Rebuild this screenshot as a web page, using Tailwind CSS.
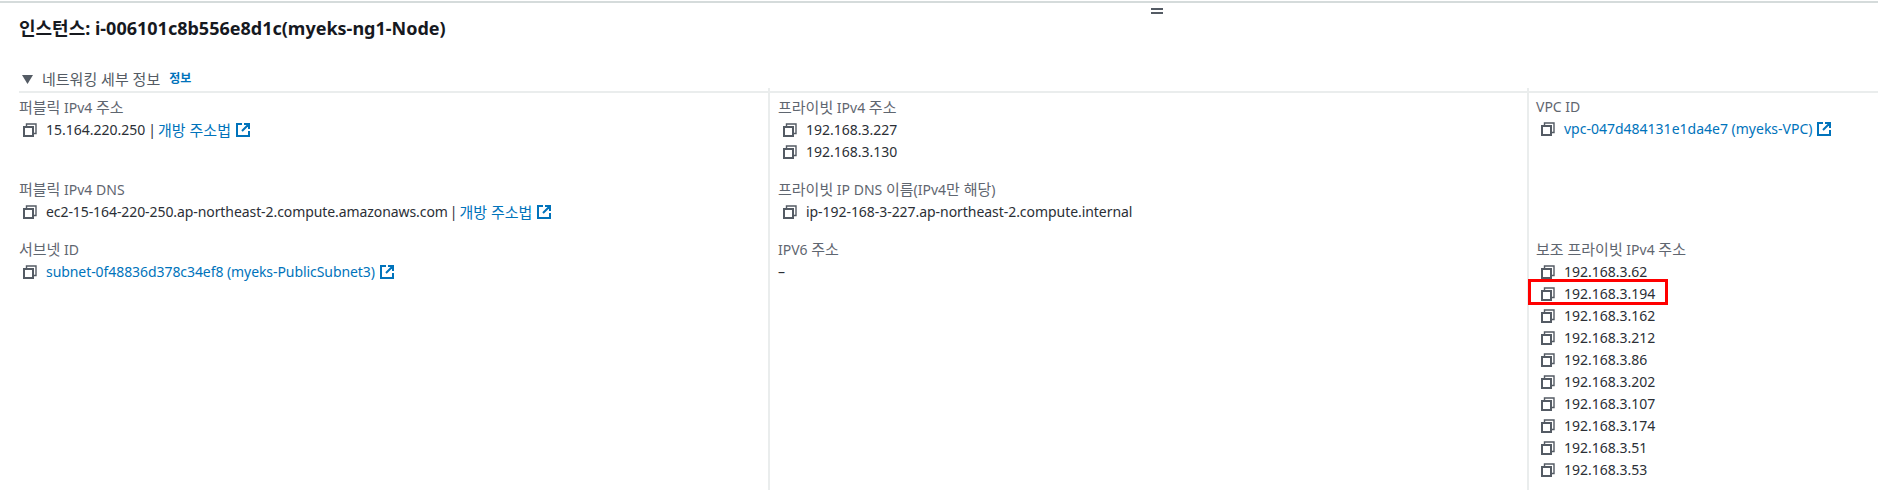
<!DOCTYPE html>
<html lang="ko">
<head>
    <meta charset="UTF-8">
    <meta name="viewport" content="width=device-width, initial-scale=1.0">
    <title>인스턴스 네트워킹 세부 정보</title>
    <script src="https://cdn.jsdelivr.net/npm/@tailwindcss/browser@4"></script>
</head>
<body class="bg-white h-[490px] overflow-hidden font-['Noto_Sans','Noto_Sans_CJK_KR',sans-serif] text-[14px] leading-[22px] text-[#2b2f36]">
    <svg width="0" height="0" class="absolute">
        <symbol id="copy" viewBox="0 0 14 14">
            <path d="M1 4h9v9H1z" fill="none" stroke="#545b64" stroke-width="2"/>
            <path d="M3.5 3V1h9.500v9.500h-2" fill="none" stroke="#545b64" stroke-width="1.400"/>
        </symbol>
        <symbol id="ext" viewBox="0 0 14 14">
            <path d="M6 1H1v12h12V8 M8 1h5v5 M13 1L6 8" fill="none" stroke="#0073bb" stroke-width="2"/>
        </symbol>
    </svg>

    <div class="h-[2px] mt-px bg-[#d5dbdb]"></div>

    <!-- resize handle -->
    <div class="absolute left-[1151px] top-[8px] w-[12px] h-[6px] border-y-2 border-[#545b64]"></div>

    <h1 class="pl-[19px] mt-[13px] h-[24px] text-[18px] leading-[24px] font-bold text-[#16191f]">인스턴스: i-006101c8b556e8d1c(myeks-ng1-Node)</h1>

    <div class="ml-[19px] mt-[29px] h-[24px] border-b-2 border-[#eaeded] flex items-start">
        <svg class="mt-[6px] ml-[3px] mr-[9px]" width="11" height="9" viewBox="0 0 11 9"><path d="M0 0h11L5.500 9z" fill="#545b64"/></svg>
        <span class="text-[#545b64] text-[15px] leading-[20px]">네트워킹 세부 정보</span>
        <span class="ml-[9px] text-[12px] leading-[20px] font-bold text-[#0073bb]">정보</span>
    </div>

    <div class="grid grid-cols-[749px_759px_1fr] ml-[19px] -mt-[5px] h-[405px]">
        <!-- col 1 -->
        <div class="pt-[8px]">
            <div class="h-[82px]">
                <div class="text-[#5f6670]"><span class="text-[15px]">퍼블릭</span> IPv4 <span class="text-[15px]">주소</span></div>
                <div class="flex items-center h-[22px] pl-[4px]">
                    <svg class="w-[14px] h-[14px] mr-[9px]"><use href="#copy"/></svg>
                    <span>15.164.220.250</span><span class="ml-[3px] mr-[2px]">|</span><a class="text-[15px] text-[#0073bb]">개방 주소법</a>
                    <svg class="w-[14px] h-[14px] ml-[5px]"><use href="#ext"/></svg>
                </div>
            </div>
            <div class="h-[60px]">
                <div class="text-[#5f6670]"><span class="text-[15px]">퍼블릭</span> IPv4 DNS</div>
                <div class="flex items-center h-[22px] pl-[4px]">
                    <svg class="w-[14px] h-[14px] mr-[9px]"><use href="#copy"/></svg>
                    <span class="tracking-[-0.08px]">ec2-15-164-220-250.ap-northeast-2.compute.amazonaws.com</span><span class="mx-[2px]">|</span><a class="text-[15px] text-[#0073bb]">개방 주소법</a>
                    <svg class="w-[14px] h-[14px] ml-[5px]"><use href="#ext"/></svg>
                </div>
            </div>
            <div>
                <div class="text-[#5f6670]"><span class="text-[15px]">서브넷</span> ID</div>
                <div class="flex items-center h-[22px] pl-[4px]">
                    <svg class="w-[14px] h-[14px] mr-[9px]"><use href="#copy"/></svg>
                    <a class="tracking-[-0.07px] text-[#0073bb]">subnet-0f48836d378c34ef8 (myeks-PublicSubnet3)</a>
                    <svg class="w-[14px] h-[14px] ml-[5px]"><use href="#ext"/></svg>
                </div>
            </div>
        </div>

        <!-- col 2 -->
        <div class="border-l-2 border-[#eaeded] pt-[8px] pl-[8px]">
            <div class="h-[82px]">
                <div class="text-[#5f6670]"><span class="text-[15px]">프라이빗</span> IPv4 <span class="text-[15px]">주소</span></div>
                <div class="flex items-center h-[22px] pl-[5px]">
                    <svg class="w-[14px] h-[14px] mr-[9px]"><use href="#copy"/></svg>
                    <span>192.168.3.227</span>
                </div>
                <div class="flex items-center h-[22px] pl-[5px]">
                    <svg class="w-[14px] h-[14px] mr-[9px]"><use href="#copy"/></svg>
                    <span>192.168.3.130</span>
                </div>
            </div>
            <div class="h-[60px]">
                <div class="text-[#5f6670]"><span class="text-[15px]">프라이빗</span> IP DNS <span class="text-[15px]">이름</span>(IPv4<span class="text-[15px]">만 해당</span>)</div>
                <div class="flex items-center h-[22px] pl-[5px]">
                    <svg class="w-[14px] h-[14px] mr-[9px]"><use href="#copy"/></svg>
                    <span class="tracking-[-0.05px]">ip-192-168-3-227.ap-northeast-2.compute.internal</span>
                </div>
            </div>
            <div>
                <div class="text-[#5f6670]">IPV6 <span class="text-[15px]">주소</span></div>
                <div>–</div>
            </div>
        </div>

        <!-- col 3 -->
        <div class="border-l-2 border-[#eaeded] pt-[8px] pl-[7px]">
            <div class="h-[142px]">
                <div class="text-[#5f6670]">VPC ID</div>
                <div class="flex items-center h-[22px] pl-[5px]">
                    <svg class="w-[14px] h-[14px] mr-[9px]"><use href="#copy"/></svg>
                    <a class="text-[#0073bb]">vpc-047d484131e1da4e7 (myeks-VPC)</a>
                    <svg class="w-[14px] h-[14px] ml-[4px]"><use href="#ext"/></svg>
                </div>
            </div>
            <div class="relative">
                <div class="text-[#5f6670]"><span class="text-[15px]">보조 프라이빗</span> IPv4 <span class="text-[15px]">주소</span></div>
                <div class="flex items-center h-[22px] pl-[5px]"><svg class="w-[14px] h-[14px] mr-[9px]"><use href="#copy"/></svg><span>192.168.3.62</span></div>
                <div class="flex items-center h-[22px] pl-[5px]"><svg class="w-[14px] h-[14px] mr-[9px]"><use href="#copy"/></svg><span>192.168.3.194</span></div>
                <div class="flex items-center h-[22px] pl-[5px]"><svg class="w-[14px] h-[14px] mr-[9px]"><use href="#copy"/></svg><span>192.168.3.162</span></div>
                <div class="flex items-center h-[22px] pl-[5px]"><svg class="w-[14px] h-[14px] mr-[9px]"><use href="#copy"/></svg><span>192.168.3.212</span></div>
                <div class="flex items-center h-[22px] pl-[5px]"><svg class="w-[14px] h-[14px] mr-[9px]"><use href="#copy"/></svg><span>192.168.3.86</span></div>
                <div class="flex items-center h-[22px] pl-[5px]"><svg class="w-[14px] h-[14px] mr-[9px]"><use href="#copy"/></svg><span>192.168.3.202</span></div>
                <div class="flex items-center h-[22px] pl-[5px]"><svg class="w-[14px] h-[14px] mr-[9px]"><use href="#copy"/></svg><span>192.168.3.107</span></div>
                <div class="flex items-center h-[22px] pl-[5px]"><svg class="w-[14px] h-[14px] mr-[9px]"><use href="#copy"/></svg><span>192.168.3.174</span></div>
                <div class="flex items-center h-[22px] pl-[5px]"><svg class="w-[14px] h-[14px] mr-[9px]"><use href="#copy"/></svg><span>192.168.3.51</span></div>
                <div class="flex items-center h-[22px] pl-[5px]"><svg class="w-[14px] h-[14px] mr-[9px]"><use href="#copy"/></svg><span>192.168.3.53</span></div>
                <!-- red highlight drawn on top of the row -->
                <div class="absolute left-[-8px] top-[41px] w-[140px] h-[26px] border-[3px] border-[#ff0000]"></div>
            </div>
        </div>
    </div>
</body>
</html>
